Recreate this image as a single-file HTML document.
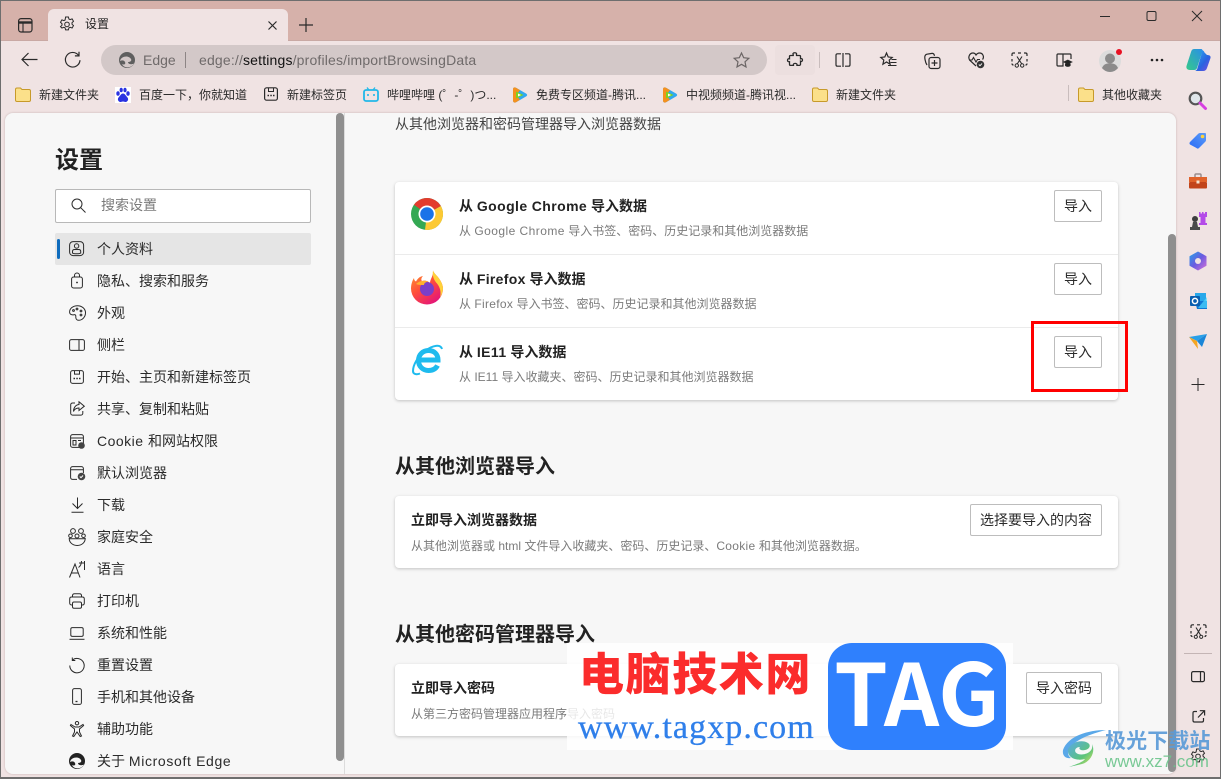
<!DOCTYPE html>
<html lang="zh"><head><meta charset="utf-8"><title>设置</title>
<style>
*{box-sizing:border-box}
html,body{margin:0;padding:0}
body{width:1221px;height:779px;overflow:hidden;position:relative;background:#f0e3e3;font-family:"Liberation Sans","Noto Sans CJK SC",sans-serif;color:#1f1f1f}
.a{position:absolute}
.t{position:absolute;white-space:nowrap;line-height:20px;font-size:14px;color:#2b2b2b}
.bm{font-size:12px;color:#2a2a2a;line-height:16px}
.nav{left:97px}
.ttl{font-weight:700;color:#222;font-size:14px}
.desc{font-size:12px;color:#7b7b7b}
.btn{position:absolute;background:#fff;border:1px solid #bdbdbd;border-radius:2px;font-size:14px;line-height:30px;text-align:center;color:#2b2b2b;height:32px;white-space:nowrap}
.card{position:absolute;left:395px;width:723px;background:#fff;border-radius:4px;box-shadow:0 1px 3px rgba(0,0,0,.22)}
.hr{position:absolute;left:395px;width:723px;height:1px;background:#ebebeb}
h2{position:absolute;margin:0;left:395px;font-size:20px;line-height:28px;font-weight:700;color:#222;white-space:nowrap}
svg{position:absolute;overflow:visible}
.s{fill:none;stroke:#2a2a2a;stroke-width:1}
</style></head><body>

<!-- title bar -->
<div class="a" style="left:0;top:0;width:1221px;height:41px;background:#d6b1aa"></div>
<div class="a" style="left:48px;top:9px;width:240px;height:32px;background:#f0e3e3;border-radius:6px 6px 0 0"></div>
<div class="a" style="left:0;top:40px;width:48px;height:1px;background:#c9a9a4"></div>
<div class="a" style="left:288px;top:40px;width:933px;height:1px;background:#c9a9a4"></div>

<svg class="s" style="left:18px;top:18px" width="15" height="15" viewBox="0 0 15 15"><rect x=".6" y=".6" width="13.4" height="13.4" rx="2.5" stroke-width="1.2"/><path d="M1 4.5h13" stroke-width="2.4"/><path d="M5 4.5V14" stroke-width="1.1"/></svg>
<svg class="s" style="left:59px;top:16px" width="16" height="16" viewBox="0 0 16 16"><path d="M6.600 1h2.800l.5 2 1.200.6 2-.7 1.400 2.400-1.500 1.400v1.500l1.500 1.400-1.400 2.400-2-.7-1.200.6-.5 2H6.600l-.5-2-1.200-.6-2 .7L1.500 10.600 3 9.200V7.700L1.500 6.300 2.900 3.900l2 .7 1.200-.6z"/><circle cx="8" cy="8.400" r="2.300"/></svg>
<div class="t" style="left:85px;top:14px;font-size:12px;color:#222">设置</div>
<svg class="s" style="left:268px;top:21px" width="9" height="9" viewBox="0 0 9 9"><path d="M.5.500l8 8M8.500.500l-8 8" stroke-width="1.200"/></svg>
<svg class="s" style="left:299px;top:18px" width="14" height="14" viewBox="0 0 14 14"><path d="M7 0v14M0 7h14" stroke-width="1.200"/></svg>

<!-- window controls -->
<svg class="s" style="left:1100px;top:10px" width="106" height="12" viewBox="0 0 106 12"><path d="M0 6.500h10"/><rect x="47" y="1.500" width="9" height="9" rx="1.500"/><path d="M92 1l10 10M102 1l-10 10"/></svg>

<!-- toolbar -->
<svg class="s" style="left:21px;top:52px" width="17" height="15" viewBox="0 0 17 15"><path d="M16.500 7.500H1M7.500 1L1 7.500 7.500 14" stroke-width="1.200"/></svg>
<svg class="s" style="left:64px;top:51px" width="17" height="17" viewBox="0 0 17 17"><path d="M14.600 4.400A7.300 7.300 0 1 0 16 9.200" stroke-width="1.200"/><path d="M15 .8v4.100h-4.100" stroke-width="1.200"/></svg>
<div class="a" style="left:101px;top:45px;width:666px;height:30px;background:#d3c8c8;border-radius:15px"></div>
<svg style="left:119px;top:52px" width="16" height="16" viewBox="0 0 16 16"><circle cx="8" cy="8" r="8" fill="#5f5f5f"/><path d="M1 9c1-5 9-6 11-2 1 2-1 3-3 3 0 2 3 3 6 1.500C13 16 5 17 3 12c2 1 4 .5 3-2C5 8 3 8 1 9z" fill="#d3c8c8"/></svg>
<div class="t" style="left:143px;top:50px;font-size:14px;color:#6f6a6a">Edge</div>
<div class="a" style="left:185px;top:52px;width:1px;height:16px;background:#8d8585"></div>
<div class="t" style="left:199px;top:50px;font-size:14px;color:#6f6a6a;letter-spacing:.17px">edge://<span style="color:#111">settings</span>/profiles/importBrowsingData</div>
<svg class="s" style="left:733px;top:52px" width="17" height="16" viewBox="0 0 17 16"><path d="M8.500 1l2.200 4.700 5.100.6-3.800 3.500 1 5.100-4.500-2.600-4.500 2.600 1-5.100L1.200 6.300l5.100-.6z" stroke="#6b6565" stroke-width="1.200"/></svg>
<div class="a" style="left:775px;top:45px;width:40px;height:30px;background:#ecdfdf;border-radius:4px"></div>
<svg class="s" style="left:787px;top:52px" width="16" height="16" viewBox="0 0 16 16"><path d="M6 1.500c.5-1 3-1 3.500 0 .3.800-.3 1.300 0 2h3c.7 0 1 .5 1 1v2.300c.8-.3 2-.3 2 1.200s-1.200 1.700-2 1.200v3c0 .5-.5 1.200-1 1.200H10c.3-.9-.2-2-1.800-2s-2.200 1-1.800 2H3.500c-.6 0-1-.5-1-1.200v-2.500c-1 .3-2-.3-2-1.500s1-1.700 2-1.400V4.500c0-.6.400-1 1-1h2.800c.2-.6-.5-1.200-.3-2z" stroke-width="1.300"/></svg>
<div class="a" style="left:819px;top:52px;width:1px;height:16px;background:#c9bdbd"></div>
<svg class="s" style="left:835px;top:53px" width="16" height="14" viewBox="0 0 16 14"><path d="M6 .8H2.500C1.500.8 1 1.500 1 2.300v9.400c0 .8.500 1.500 1.500 1.500H6M10 .8h3.500c1 0 1.500.7 1.500 1.500v9.400c0 .8-.5 1.500-1.500 1.500H10M8 0v14" stroke-width="1.200"/></svg>
<svg class="s" style="left:880px;top:52px" width="17" height="16" viewBox="0 0 17 16"><path d="M6.500 1L8.200 5l4 .4-3 2.700.9 4.100-3.600-2.200L2.900 12.200l.9-4.100-3-2.700 4-.4z" stroke-width="1.200"/><path d="M11.500 7.500h5M10.500 10.500h6M8 13.500h8.500" stroke-width="1"/></svg>
<svg class="s" style="left:924px;top:52px" width="17" height="17" viewBox="0 0 17 17"><path d="M3 13C1 10 .5 5 1 4c.3-1 1-1.600 2-1.800l5-.8c1-.1 1.800.3 2.200 1.400l.3 1" stroke-width="1.200"/><rect x="5" y="5.500" width="11" height="11" rx="2.200" stroke-width="1.200"/><path d="M10.500 8v6M7.500 11h6" stroke-width="1.200"/></svg>
<svg class="s" style="left:968px;top:52px" width="17" height="17" viewBox="0 0 17 17"><path d="M8 14L2 8.500C-.5 5.500 1.500 1 5 1c1.500 0 2.500 1 3 2 .7-1 2-2 3.500-2 3.500 0 5 4 3 6.500" stroke-width="1.200"/><path d="M1 8h3l1.500-2.500L8 10l1.500-2.500h2.500" stroke-width="1.100"/><circle cx="12.500" cy="12.500" r="3.800" fill="#333" stroke="none"/><path d="M10.800 12.500l1.200 1.200 2-2.200" stroke="#fff" stroke-width=".9"/></svg>
<svg class="s" style="left:1011px;top:52px" width="17" height="16" viewBox="0 0 17 16"><path d="M4 1H2.500C1.500 1 1 1.500 1 2.500V4M7 1h3M13 1h1.500c1 0 1.500.5 1.500 1.500V4M1 7v2.500M16 7v2.500M1 11.500c0 1 .5 1.500 1.500 1.500M16 11.500c0 1-.5 1.500-1.500 1.500" stroke-width="1.200"/><path d="M6 4.500l4.800 7.500M11 4.500L6.200 12" stroke-width="1.100"/><circle cx="5.800" cy="13.500" r="1.700"/><circle cx="11.200" cy="13.500" r="1.700"/></svg>
<svg class="s" style="left:1056px;top:53px" width="16" height="15" viewBox="0 0 16 15"><path d="M7 1v12H2c-.7 0-1-.4-1-1V2c0-.7.3-1 1-1h12c.6 0 1 .4 1 1v4M7 1h2" stroke-width="1.200"/><path d="M8 9l3.800-1.800L15.700 9l-3.900 1.800z" fill="#222"/><path d="M9.500 10.500v2c1 1.200 3.600 1.200 4.600 0v-2" fill="#222"/></svg>
<svg style="left:1099px;top:49px" width="24" height="24" viewBox="0 0 24 24"><circle cx="11" cy="12" r="11" fill="#dcdcdc"/><circle cx="11" cy="9.500" r="5" fill="#8b8b8b"/><path d="M3 19c1.500-4 5-4.800 8-4.800s6.500.8 8 4.800c-2 2.500-5 4-8 4s-6-1.500-8-4z" fill="#8b8b8b"/><circle cx="20" cy="3" r="3" fill="#e81123"/></svg>
<svg style="left:1150px;top:58px" width="14" height="4" viewBox="0 0 14 4"><circle cx="2" cy="2" r="1.300" fill="#222"/><circle cx="7" cy="2" r="1.300" fill="#222"/><circle cx="12" cy="2" r="1.300" fill="#222"/></svg>
<svg style="left:1186px;top:48px" width="25" height="24" viewBox="0 0 25 24"><defs><linearGradient id="c1" x1="0" y1="1" x2="1" y2="0"><stop offset="0" stop-color="#35c98a"/><stop offset="1" stop-color="#2a8fe8"/></linearGradient><linearGradient id="c2" x1="0" y1="0" x2="1" y2="1"><stop offset="0" stop-color="#2ab5f2"/><stop offset=".6" stop-color="#2a63e0"/><stop offset="1" stop-color="#7c4be0"/></linearGradient></defs><path d="M8 1h7c1 0 1.800 1 1.500 2L11 20c-.4 1.400-1.500 2-3 2H4c-3 0-4-2-3.500-4L5 4c.5-2 1.500-3 3-3z" fill="url(#c1)"/><path d="M15 2c2 0 3 1 3.500 2.500L21 7c2.500 0 4 1 3.500 3L21 20c-.6 2-2 3-4 3H8c2 0 3-1 3.500-3l4-14c.4-1.500 0-3-.5-4z" fill="url(#c2)"/></svg>

<!-- bookmarks -->
<svg style="left:15px;top:87px" width="16" height="15" viewBox="0 0 16 15"><path d="M.5 2.500C.5 1.500 1 1 2 1h3.500l1.500 1.500h7c1 0 1.500.5 1.500 1.500v9c0 1-.5 1.500-1.500 1.500H2c-1 0-1.500-.5-1.500-1.500z" fill="#fbe08a" stroke="#c79a2a"/></svg>
<div class="t bm" style="left:39px;top:87px">新建文件夹</div>
<svg style="left:115px;top:87px" width="16" height="16" viewBox="0 0 16 16"><rect width="16" height="16" fill="#fff"/><g fill="#2932e1"><ellipse cx="3" cy="6.500" rx="1.700" ry="2.300"/><ellipse cx="6.200" cy="3" rx="1.600" ry="2.300"/><ellipse cx="10" cy="3" rx="1.600" ry="2.300"/><ellipse cx="13" cy="6.500" rx="1.700" ry="2.300"/><path d="M8 6.500c-2 0-3 2.500-4.500 4-1.500 2 0 4.500 2 4.500 1 0 1.500-.5 2.500-.5s1.500.5 2.500.5c2 0 3.500-2.500 2-4.500C11 9 10 6.500 8 6.500z"/></g></svg>
<div class="t bm" style="left:139px;top:87px">百度一下，你就知道</div>
<svg class="s" style="left:264px;top:87px" width="14" height="14" viewBox="0 0 14 14"><path d="M4.500 1v3.500h5V1" stroke-width="1"/><rect x=".6" y=".8" width="12.800" height="12.400" rx="2" stroke-width="1.200"/><path d="M3.500 8.500h1.500M6.300 8.500h1.500M9 8.500h1.500" stroke-width="1.400"/></svg>
<div class="t bm" style="left:287px;top:87px">新建标签页</div>
<svg style="left:363px;top:87px" width="16" height="15" viewBox="0 0 16 15"><path d="M4 .5l2 2.500M12 .5L10 3" stroke="#22b8e8" stroke-width="1.300" fill="none"/><rect x="1" y="3" width="14" height="11" rx="2" fill="none" stroke="#22b8e8" stroke-width="1.800"/><path d="M5 7v2M11 7v2" stroke="#22b8e8" stroke-width="1.600"/></svg>
<div class="t bm" style="left:387px;top:87px">哔哩哔哩 (゜-゜)つ...</div>
<svg style="left:512px;top:87px" width="16" height="16" viewBox="0 0 16 16"><path d="M1 2.500c0-2 1.500-2.500 3-1.700l10 5.700c1.500 1 1.500 2 0 3L4 15.200c-1.500.8-3 .3-3-1.700z" fill="#30a9f0"/><path d="M1 2.500c0-2 1.500-2.500 3-1.700l4 2.300-4 5 4 4.700-4 2.400C2.500 16 1 15.500 1 13.500z" fill="#f5911e"/><path d="M4 4.500l7.500 3.500L4 11.500z" fill="#7ed321"/><path d="M6 6.500l3 1.500-3 1.500z" fill="#fff"/></svg>
<div class="t bm" style="left:536px;top:87px">免费专区频道-腾讯...</div>
<svg style="left:662px;top:87px" width="16" height="16" viewBox="0 0 16 16"><path d="M1 2.500c0-2 1.500-2.500 3-1.700l10 5.700c1.500 1 1.500 2 0 3L4 15.200c-1.500.8-3 .3-3-1.700z" fill="#30a9f0"/><path d="M1 2.500c0-2 1.500-2.500 3-1.700l4 2.300-4 5 4 4.700-4 2.400C2.500 16 1 15.500 1 13.500z" fill="#f5911e"/><path d="M4 4.500l7.500 3.500L4 11.500z" fill="#7ed321"/><path d="M6 6.500l3 1.500-3 1.500z" fill="#fff"/></svg>
<div class="t bm" style="left:686px;top:87px">中视频频道-腾讯视...</div>
<svg style="left:812px;top:87px" width="16" height="15" viewBox="0 0 16 15"><path d="M.5 2.500C.5 1.500 1 1 2 1h3.500l1.500 1.500h7c1 0 1.500.5 1.500 1.500v9c0 1-.5 1.500-1.500 1.500H2c-1 0-1.500-.5-1.500-1.500z" fill="#fbe08a" stroke="#c79a2a"/></svg>
<div class="t bm" style="left:836px;top:87px">新建文件夹</div>
<div class="a" style="left:1068px;top:85px;width:1px;height:16px;background:#c9bdbd"></div>
<svg style="left:1078px;top:87px" width="16" height="15" viewBox="0 0 16 15"><path d="M.5 2.500C.5 1.500 1 1 2 1h3.500l1.500 1.500h7c1 0 1.500.5 1.500 1.500v9c0 1-.5 1.500-1.500 1.500H2c-1 0-1.500-.5-1.500-1.500z" fill="#fbe08a" stroke="#c79a2a"/></svg>
<div class="t bm" style="left:1102px;top:87px">其他收藏夹</div>

<!-- main content -->
<div class="a" style="left:5px;top:113px;width:1171px;height:661px;background:#f7f7f7;border-radius:8px;box-shadow:0 0 2px rgba(120,90,90,.35)"></div>
<div class="a" style="left:344px;top:113px;width:1px;height:661px;background:#dcdcdc"></div>
<div class="a" style="left:336px;top:113px;width:8px;height:648px;background:#8f8f8f;border-radius:4px"></div>
<div class="a" style="left:1168px;top:234px;width:8px;height:538px;background:#8f8f8f;border-radius:4px"></div>

<div class="t" style="left:55px;top:146px;font-size:24px;font-weight:700;line-height:30px;color:#222">设置</div>
<div class="a" style="left:55px;top:189px;width:256px;height:34px;background:#fff;border:1px solid #b8b8b8;border-radius:2px"></div>
<svg class="s" style="left:71px;top:198px" width="15" height="15" viewBox="0 0 15 15"><circle cx="6" cy="6" r="5"/><path d="M9.700 9.700l4.800 4.800"/></svg>
<div class="t" style="left:101px;top:195px;color:#7a7a7a">搜索设置</div>

<div class="a" style="left:55px;top:233px;width:256px;height:32px;background:#e5e5e5;border-radius:2px"></div>
<div class="a" style="left:57px;top:239px;width:3px;height:20px;background:#0f6cbd;border-radius:2px"></div>

<!-- nav icons -->
<svg class="s" style="left:69px;top:241px" width="16" height="16" viewBox="0 0 16 16"><rect x=".6" y=".6" width="14" height="14" rx="3.500"/><circle cx="7.600" cy="5" r="2.200"/><path d="M3.500 12v-1.500C3.500 9 4.500 8.500 5.500 8.500h4.200c1 0 2 .5 2 2V12c-1 1-7.200 1-8.200 0z"/></svg>
<svg class="s" style="left:71px;top:272px" width="12" height="17" viewBox="0 0 12 17"><rect x=".6" y="5" width="10.800" height="11" rx="2"/><path d="M3.500 5V3.500a2.500 2.500 0 0 1 5 0V5"/><circle cx="6" cy="10.500" r=".9" fill="#222" stroke="none"/></svg>
<svg class="s" style="left:69px;top:305px" width="17" height="16" viewBox="0 0 17 16"><path d="M8.500.7C4 .7.600 3.500.600 7c0 3 3 3 4.400 2.700 1.500-.2 2 .8 1.800 2-.2 1.700.7 3.600 2.700 3.600 4 0 7-3.500 7-7.500S13 .7 8.500.7z"/><circle cx="8" cy="4" r=".9"/><circle cx="12" cy="6" r=".9"/><circle cx="12" cy="10" r=".9"/><circle cx="4.500" cy="5.500" r=".9"/></svg>
<svg class="s" style="left:69px;top:339px" width="16" height="12" viewBox="0 0 16 12"><rect x=".6" y=".6" width="14.800" height="10.800" rx="1.800"/><path d="M10 .6v10.800"/></svg>
<svg class="s" style="left:70px;top:370px" width="14" height="14" viewBox="0 0 14 14"><path d="M4.500 .6v3.500h5V.6"/><rect x=".6" y=".6" width="12.800" height="12.800" rx="2"/><path d="M3.500 8.500h1.500M6.300 8.500h1.500M9 8.500h1.500" stroke-width="1.400"/></svg>
<svg class="s" style="left:70px;top:401px" width="15" height="15" viewBox="0 0 15 15"><path d="M5 2H2.500C1.500 2 .7 2.800.7 3.800v8.500c0 1 .8 1.800 1.800 1.800H11c1 0 1.800-.8 1.800-1.800V10"/><path d="M9 .8l5.300 4.400L9 9.500V7C6.500 7 4.500 8 3.500 10.500 3.500 7 5.500 3.800 9 3.500z"/></svg>
<svg class="s" style="left:70px;top:434px" width="16" height="15" viewBox="0 0 16 15"><rect x=".6" y=".6" width="12.800" height="12.800" rx="2"/><path d="M.6 4h12.800M3 6.500h3v4.500H3zM8 6.500h3"/><circle cx="11.500" cy="11.500" r="2.800" fill="#444" stroke="#444"/></svg>
<svg class="s" style="left:70px;top:466px" width="16" height="15" viewBox="0 0 16 15"><path d="M7 13.400H2.600c-1.100 0-2-.8-2-2V2.600c0-1.100.9-2 2-2h8.800c1.100 0 2 .9 2 2V7M.6 3.800h12.800"/><circle cx="11.500" cy="10.500" r="3.800" fill="#444" stroke="none"/><path d="M9.800 10.500l1.200 1.200 2-2.200" stroke="#fff"/></svg>
<svg class="s" style="left:71px;top:497px" width="13" height="16" viewBox="0 0 13 16"><path d="M6.500 .5v10.500M1.500 6.500l5 5 5-5M.5 15.300h12"/></svg>
<svg class="s" style="left:68px;top:528px" width="18" height="18" viewBox="0 0 18 18"><circle cx="5" cy="3" r="2.400"/><circle cx="13" cy="3" r="2.400"/><circle cx="9" cy="8" r="2"/><circle cx="2.500" cy="7.800" r="1.800"/><circle cx="15.500" cy="7.800" r="1.800"/><path d="M.8 10.500c0 0 2 .3 3.500.3h9.400c1.500 0 3.500-.3 3.500-.3 0 3.500-3 7-8 7s-8-3.500-8-7z"/></svg>
<svg class="s" style="left:69px;top:560px" width="17" height="18" viewBox="0 0 17 18"><path d="M.5 17.500L6 4l5 13.500M2.500 13h7"/><path d="M10 3h5M12.500 1c0 3-1 5-3 6.500M15.500 1v9"/></svg>
<svg class="s" style="left:69px;top:593px" width="16" height="16" viewBox="0 0 16 16"><path d="M3.500 4V2.600C3.500 1.400 4.300.7 5.500.7h5c1.200 0 2 .7 2 1.900V4M3.500 12H2.600C1.400 12 .7 11.200.7 10V6c0-1.200.7-2 1.900-2h10.800c1.200 0 1.900.8 1.900 2v4c0 1.200-.7 2-1.900 2h-.9"/><rect x="3.500" y="9" width="9" height="6.300" rx="1.500"/></svg>
<svg class="s" style="left:69px;top:627px" width="16" height="13" viewBox="0 0 16 13"><rect x="1.800" y=".6" width="12.400" height="8.800" rx="1.500"/><path d="M.5 12.300h15"/></svg>
<svg class="s" style="left:69px;top:657px" width="16" height="16" viewBox="0 0 16 16"><path d="M3.500 3A7.200 7.200 0 1 1 .8 8.500"/><path d="M3.300.5V3.500h3"/></svg>
<svg class="s" style="left:72px;top:688px" width="10" height="17" viewBox="0 0 10 17"><rect x=".6" y=".6" width="8.800" height="15.800" rx="1.800"/><path d="M3.500 13.500h2" stroke-width="1.300"/></svg>
<svg class="s" style="left:70px;top:721px" width="14" height="16" viewBox="0 0 14 16"><circle cx="7" cy="2.200" r="1.700"/><path d="M1 3.500l4 2.500h4l4-2.500.6 1L9.500 8v3l2 4-1.300.5L7 11l-3.200 4.500L2.500 15l2-4V8L.4 4.500z"/></svg>
<svg style="left:69px;top:753px" width="16" height="16" viewBox="0 0 16 16"><circle cx="8" cy="8" r="8" fill="#222"/><path d="M1 9c1-5 9-6 11-2 1 2-1 3-3 3 0 2 3 3 6 1.500C13 16 5 17 3 12c2 1 4 .5 3-2C5 8 3 8 1 9z" fill="#f7f7f7"/></svg>

<div class="t nav" style="top:239px">个人资料</div>
<div class="t nav" style="top:271px">隐私、搜索和服务</div>
<div class="t nav" style="top:303px">外观</div>
<div class="t nav" style="top:335px">侧栏</div>
<div class="t nav" style="top:367px">开始、主页和新建标签页</div>
<div class="t nav" style="top:399px">共享、复制和粘贴</div>
<div class="t nav" style="top:431px"><span style="letter-spacing:.5px">Cookie </span>和网站权限</div>
<div class="t nav" style="top:463px">默认浏览器</div>
<div class="t nav" style="top:495px">下载</div>
<div class="t nav" style="top:527px">家庭安全</div>
<div class="t nav" style="top:559px">语言</div>
<div class="t nav" style="top:591px">打印机</div>
<div class="t nav" style="top:623px">系统和性能</div>
<div class="t nav" style="top:655px">重置设置</div>
<div class="t nav" style="top:687px">手机和其他设备</div>
<div class="t nav" style="top:719px">辅助功能</div>
<div class="t nav" style="top:751px">关于 <span style="letter-spacing:.65px">Microsoft Edge</span></div>

<!-- right pane -->
<div class="t" style="left:395px;top:114px;color:#444">从其他浏览器和密码管理器导入浏览器数据</div>

<div class="card" style="top:182px;height:218px"></div>
<div class="hr" style="top:254px"></div>
<div class="hr" style="top:327px"></div>

<svg style="left:411px;top:198px" width="32" height="32" viewBox="0 0 32 32"><circle cx="16" cy="16" r="16" fill="#34a853"/><path d="M16 16L29.860 8A16 16 0 0 0 3 6.700z" fill="#e33b2e"/><path d="M16 16L29.860 8A16 16 0 0 1 14 31.900z" fill="#fcc934"/><circle cx="16" cy="16" r="8.500" fill="#fff"/><circle cx="16" cy="16" r="6.800" fill="#1a73e8"/></svg>
<svg style="left:411px;top:270px" width="32" height="34" viewBox="0 0 32 34"><defs><linearGradient id="ff" x1="0" y1="0" x2=".7" y2="1"><stop offset="0" stop-color="#ff9a2e"/><stop offset=".5" stop-color="#ff4f3a"/><stop offset="1" stop-color="#e3147a"/></linearGradient></defs><path d="M22 .5c1 3 4 5 6 8 3 4 4 8 4 10a16 16 0 0 1-32 0C0 15 1 11 3 8c0 2 1 3 2 3.500C7 8 9 6.500 12 6c-2 2-2 4-1 5 3-1 6 0 8 2 0-4 4-8 3-12.500z" fill="url(#ff)"/><path d="M22 .5c1 3 4 5 6 8 3 4 4 8 4 10 0 3-1 6-3 9 1-4 1-9-3-14-3-3-5-8-4-13z" fill="#ffd23a"/><circle cx="16" cy="19" r="7" fill="#7b3ec9"/><path d="M5 14c3-3 7-4 12-2.500-3 1-4 2-4 3.500-3 0-6 0-8-1z" fill="#ffb02e"/></svg>
<svg style="left:411px;top:344px" width="32" height="32" viewBox="0 0 32 32"><path d="M31 5C29.500 0 22 1 14 7 7 12 2 21 2 27c0 3 3 4 7 2.500" fill="none" stroke="#1ebbee" stroke-width="2"/><path d="M8 16h19c0-6-4-9.500-9.500-9.500S7.500 10.500 7.500 16.500s4.500 10 10 10c4.500 0 7.500-2 9-5" fill="none" stroke="#1ebbee" stroke-width="5"/></svg>

<div class="t ttl" style="left:459px;top:196px">从 <span style="letter-spacing:.4px">Google Chrome</span> 导入数据</div>
<div class="t desc" style="left:459px;top:221px">从 <span style="letter-spacing:.45px">Google Chrome</span> 导入书签、密码、历史记录和其他浏览器数据</div>
<div class="btn" style="left:1054px;top:190px;width:48px">导入</div>

<div class="t ttl" style="left:459px;top:269px">从 <span style="letter-spacing:.3px">Firefox</span> 导入数据</div>
<div class="t desc" style="left:459px;top:294px">从 <span style="letter-spacing:.3px">Firefox</span> 导入书签、密码、历史记录和其他浏览器数据</div>
<div class="btn" style="left:1054px;top:263px;width:48px">导入</div>

<div class="t ttl" style="left:459px;top:342px">从 <span style="letter-spacing:.4px">IE11</span> 导入数据</div>
<div class="t desc" style="left:459px;top:367px">从 IE11 导入收藏夹、密码、历史记录和其他浏览器数据</div>
<div class="btn" style="left:1054px;top:336px;width:48px">导入</div>

<div class="a" style="left:1031px;top:321px;width:97px;height:71px;border:3px solid #f00"></div>

<h2 style="top:453px">从其他浏览器导入</h2>
<div class="card" style="top:496px;height:72px"></div>
<div class="t ttl" style="left:411px;top:510px">立即导入浏览器数据</div>
<div class="t desc" style="left:411px;top:536px">从其他浏览器或 html 文件导入收藏夹、密码、历史记录、<span style="letter-spacing:.3px">Cookie</span> 和其他浏览器数据。</div>
<div class="btn" style="left:970px;top:504px;width:132px">选择要导入的内容</div>

<h2 style="top:621px">从其他密码管理器导入</h2>
<div class="card" style="top:664px;height:72px"></div>
<div class="t ttl" style="left:411px;top:678px">立即导入密码</div>
<div class="t desc" style="left:411px;top:704px">从第三方密码管理器应用程序导入密码</div>
<div class="btn" style="left:1026px;top:672px;width:76px">导入密码</div>

<!-- sidebar icons -->
<svg style="left:1188px;top:91px" width="19" height="19" viewBox="0 0 19 19"><circle cx="7.500" cy="7.500" r="5.800" fill="#dfe6ea" stroke="#555" stroke-width="2.200"/><path d="M12 12l5.500 5.500" stroke="#d63fe0" stroke-width="3" stroke-linecap="round"/></svg>
<svg style="left:1189px;top:132px" width="18" height="18" viewBox="0 0 18 18"><defs><linearGradient id="tg" x1="0" y1="1" x2="1" y2="0"><stop offset="0" stop-color="#2a6cf5"/><stop offset="1" stop-color="#5c9bf8"/></linearGradient></defs><path d="M1 10l8-8c.5-.5 1-1 2-1h5c.7 0 1 .4 1 1v6c0 1-.5 1.500-1 2l-6 6c-.8.8-1.800.8-2.500 0L1 12.500C.3 11.800.3 10.800 1 10z" fill="url(#tg)"/><circle cx="13.500" cy="4.500" r="1.800" fill="#ffd23a"/></svg>
<svg style="left:1189px;top:173px" width="18" height="16" viewBox="0 0 18 16"><path d="M6 4V2c0-.7.4-1 1-1h4c.6 0 1 .3 1 1v2" fill="none" stroke="#9a8c8c" stroke-width="1.500"/><rect y="4" width="18" height="5" fill="#e0622a"/><rect y="9" width="18" height="6.500" rx="1" fill="#c2441a"/><rect x="7.500" y="7.500" width="3" height="3" fill="#f4e4d0"/></svg>
<svg style="left:1189px;top:212px" width="18" height="18" viewBox="0 0 18 18"><path d="M10 0h1.500v1.500H13V0h1.500v1.500H16V0h2v5h-1.500v6H18v2h-8v-2h1.500V5H10z" fill="#b44be8"/><circle cx="6" cy="7" r="3" fill="#3d3d3d"/><path d="M4 10h4l1 5H3zM1 15h10v3H1z" fill="#4a4a4a"/></svg>
<svg style="left:1190px;top:252px" width="16" height="18" viewBox="0 0 16 18"><defs><linearGradient id="m3" x1="0" y1="0" x2="1" y2="1"><stop offset="0" stop-color="#2aa0e8"/><stop offset=".5" stop-color="#6a5be0"/><stop offset="1" stop-color="#d070d8"/></linearGradient></defs><path d="M8 0l8 4.500v9L8 18l-8-4.500v-9z" fill="url(#m3)" stroke="url(#m3)" stroke-linejoin="round"/><circle cx="8" cy="9" r="3" fill="#f0e3e3"/></svg>
<svg style="left:1190px;top:293px" width="17" height="16" viewBox="0 0 17 16"><path d="M5 0h11v8H5z" fill="#28a8ea"/><path d="M5 8h12v8H7z" fill="#0f78d4"/><path d="M17 4v11H8z" fill="#50d9ff" opacity=".7"/><rect y="3" width="10" height="10" rx="1" fill="#0a5fb0"/><circle cx="5" cy="8" r="2.600" fill="none" stroke="#fff" stroke-width="1.500"/></svg>
<svg style="left:1189px;top:334px" width="18" height="15" viewBox="0 0 18 15"><path d="M0 3l18-3L8 7z" fill="#2aa0e8"/><path d="M0 3l8 4 1 8z" fill="#f5a623"/><path d="M18 0L8 7l5 6z" fill="#1a86d8"/></svg>
<svg class="s" style="left:1191px;top:378px" width="14" height="13" viewBox="0 0 14 13"><path d="M7 0v13M.5 6.500h13"/></svg>
<svg class="s" style="left:1190px;top:624px" width="17" height="15" viewBox="0 0 17 15"><path d="M4 .8H2.500C1.500.8 1 1.300 1 2.300V4M7 .8h3M13 .8h1.500c1 0 1.500.5 1.500 1.500V4M1 7v2.500M16 7v2.500M1 11c0 1 .5 1.500 1.500 1.500M16 11c0 1-.5 1.500-1.500 1.500" stroke-width="1.200"/><path d="M6 3.500l4.800 8M11 3.500L6.200 11.500" stroke-width="1.100"/><circle cx="5.800" cy="12.800" r="1.600"/><circle cx="11.200" cy="12.800" r="1.600"/></svg>
<div class="a" style="left:1184px;top:653px;width:28px;height:1px;background:#c4b5b5"></div>
<svg class="s" style="left:1191px;top:671px" width="14" height="11" viewBox="0 0 14 11"><rect x=".6" y=".6" width="12.800" height="10" rx="1.600" stroke-width="1.200"/><path d="M9.500 .6v10" stroke-width="1.200"/></svg>
<svg class="s" style="left:1192px;top:710px" width="13" height="13" viewBox="0 0 13 13"><path d="M5 1.500H2.500C1.500 1.500 1 2 1 3v7.500c0 1 .5 1.500 1.500 1.500H10c1 0 1.500-.5 1.500-1.500V8" stroke-width="1.200"/><path d="M6 7.500L12.500.7M7.800.7h4.800v4.800" stroke-width="1.200"/></svg>
<svg class="s" style="left:1190px;top:748px" width="16" height="16" viewBox="0 0 16 16"><path d="M6.600 1h2.800l.5 2 1.200.6 2-.7 1.400 2.400-1.500 1.400v1.500l1.500 1.400-1.400 2.400-2-.7-1.200.6-.5 2H6.600l-.5-2-1.200-.6-2 .7L1.500 10.600 3 9.200V7.700L1.500 6.300 2.900 3.900l2 .7 1.200-.6z"/><circle cx="8" cy="8.400" r="2.300"/></svg>

<!-- watermark -->
<div class="a" style="left:567px;top:643px;width:446px;height:107px;background:rgba(255,255,255,.82)"></div>
<div class="t" style="left:579px;top:642px;font-size:45px;line-height:58px;font-weight:900;color:#fb2c2c;letter-spacing:1.6px;font-family:'Noto Sans CJK SC',sans-serif">电脑技术网</div>
<div class="t" style="left:578px;top:709px;font-size:34px;line-height:38px;color:#2f7fea;font-family:'Liberation Serif',serif;letter-spacing:1.1px;-webkit-text-stroke:.3px #2f7fea">www.tagxp.com</div>
<div class="a" style="left:828px;top:643px;width:178px;height:107px;background:#2f80fd;border-radius:24px"></div>
<div class="t" style="left:828px;top:643px;width:178px;text-align:center;font-size:86px;line-height:92px;font-weight:700;color:#fff;font-family:'Noto Sans CJK SC',sans-serif">TAG</div>

<svg style="left:1062px;top:728px" width="46" height="42" viewBox="0 0 46 42"><defs><linearGradient id="sw" x1="0" y1="0" x2="1" y2="1"><stop offset="0" stop-color="#5aa8e8"/><stop offset=".6" stop-color="#5cc47a"/><stop offset="1" stop-color="#e8e65a"/></linearGradient></defs><path d="M44 2C26 2 6 8 1 22c-1 6 3 9 8 8-3-2-4-5-1-10C13 12 28 6 44 2z" fill="#5aa8e8"/><path d="M6 21c3-7 14-10 20-6 3 2 2 6-3 7-4 1-7-1-5-3-5 0-7 5-2 7 8 2 16-3 14-10 4 8-2 18-10 20-4 1-9 2-13 3 8-3 14-5 16-8-7 2-18 0-17-10z" fill="url(#sw)"/></svg>
<div class="t" style="left:1105px;top:728px;font-size:21px;line-height:28px;font-weight:700;color:#5b9bd8;opacity:.92;letter-spacing:.1px">极光下载站</div>
<div class="t" style="left:1105px;top:751px;font-size:17px;line-height:22px;color:#6cc58c;opacity:.9">www.xz7.com</div>

<!-- frame -->
<div class="a" style="left:0;top:0;width:1221px;height:1px;background:#6e6e6e"></div>
<div class="a" style="left:0;top:0;width:1px;height:779px;background:#6e6e6e"></div>
<div class="a" style="left:1220px;top:0;width:1px;height:779px;background:#6e6e6e"></div>
<div class="a" style="left:0;top:777px;width:1221px;height:2px;background:#6e6e6e"></div>
</body></html>
